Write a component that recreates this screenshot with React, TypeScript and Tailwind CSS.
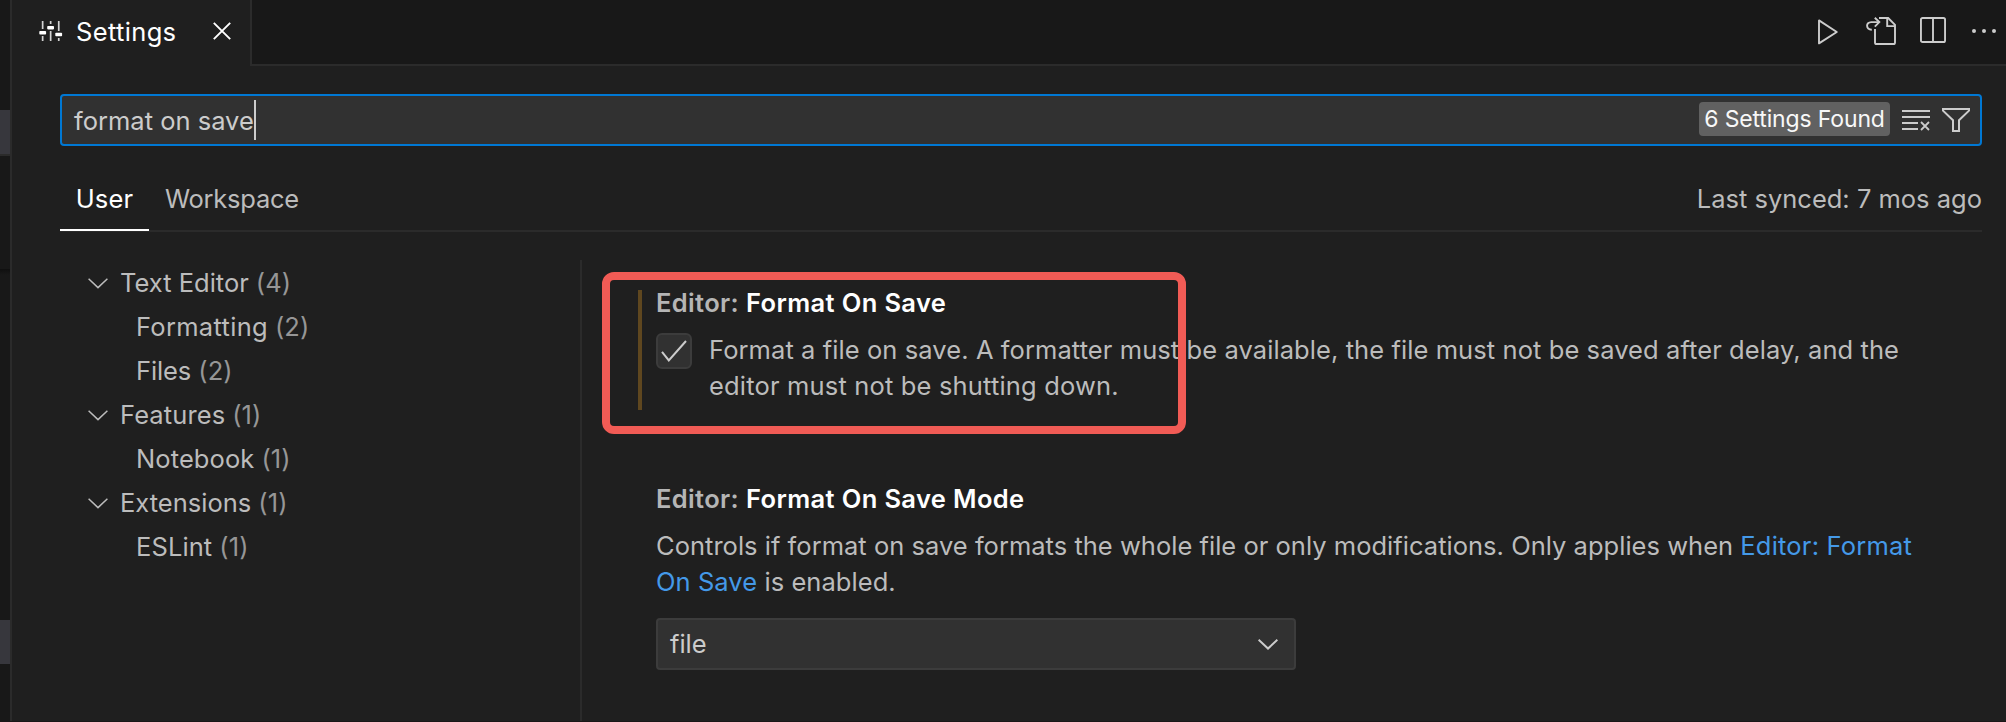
import type { ReactNode } from "react";

type TreeItem = { label: string; count: number; child?: boolean; spacing: string };

const tree: TreeItem[] = [
  { label: "Text Editor", count: 4, spacing: "tracking-[0px]" },
  { label: "Formatting", count: 2, child: true, spacing: "tracking-[0.3px]" },
  { label: "Files", count: 2, child: true, spacing: "tracking-[-0.1px]" },
  { label: "Features", count: 1, spacing: "tracking-[0.1px]" },
  { label: "Notebook", count: 1, child: true, spacing: "tracking-[0.1px]" },
  { label: "Extensions", count: 1, spacing: "tracking-[0px]" },
  { label: "ESLint", count: 1, child: true, spacing: "tracking-[0.1px]" },
];

function SettingsIcon() {
  return (
    <svg width="24" height="20" viewBox="0 0 24 20" className="shrink-0" fill="currentColor">
      <path d="M2.8 0h1.7v8H2.8zM2.8 15h1.7v5H2.8zM10.8 0h1.7v3h-1.7zM10.8 10h1.7v10h-1.7zM18.9 0h1.7v10h-1.7zM18.9 17h1.7v3h-1.7z" opacity="0.8" />
      <rect x="0.3" y="10" width="6.8" height="3.6" rx="0.8" />
      <rect x="8.2" y="5" width="6.8" height="3.4" rx="0.8" />
      <rect x="16.3" y="11.8" width="6.8" height="3.4" rx="0.8" />
    </svg>
  );
}

function CloseIcon() {
  return (
    <svg width="18" height="18" viewBox="0 0 18 18" className="shrink-0" fill="none" stroke="currentColor" strokeWidth="1.9">
      <path d="M0.8 0.8 17.2 17.2M17.2 0.8 0.8 17.2" />
    </svg>
  );
}

function RunIcon() {
  return (
    <svg width="21" height="26" viewBox="0 0 21 26" fill="none" stroke="currentColor" strokeWidth="1.9" strokeLinejoin="round">
      <path d="M1 1.4V24.4L18.8 13Z" />
    </svg>
  );
}

function OpenFileIcon() {
  return (
    <svg width="30" height="28" viewBox="0 0 30 28" fill="none" stroke="currentColor" strokeWidth="1.9">
      <path d="M13 1H22.2L29 7.8V25.4Q29 27 27.4 27H10.6Q9 27 9 25.4V12" />
      <path d="M21.2 1V9.1H29" />
      <path d="M5.8 12.7C-0.4 12.4-0.4 5.2 5.2 5.1H13" />
      <path d="M8.8 0.8 13.3 5.1 8.8 9.6" />
    </svg>
  );
}

function SplitIcon() {
  return (
    <svg width="26" height="26" viewBox="0 0 26 26" fill="none" stroke="currentColor" strokeWidth="1.9">
      <rect x="0.95" y="0.95" width="24.1" height="24.1" rx="1.6" />
      <path d="M13 1V25" />
    </svg>
  );
}

function MoreIcon() {
  return (
    <svg width="24" height="4" viewBox="0 0 24 4" fill="currentColor">
      <circle cx="2" cy="2" r="2" />
      <circle cx="12" cy="2" r="2" />
      <circle cx="22" cy="2" r="2" />
    </svg>
  );
}

function ClearIcon() {
  return (
    <svg width="28" height="21" viewBox="0 0 28 21" fill="none" stroke="currentColor" strokeWidth="2">
      <path d="M0 1H28M0 7H28M0 13H16M0 19H16" />
      <path d="M19 12 27 20M27 12 19 20" strokeWidth="1.8" />
    </svg>
  );
}

function FilterIcon() {
  return (
    <svg width="28" height="24" viewBox="0 0 28 24" fill="none" stroke="currentColor" strokeWidth="2">
      <path d="M1 1H27V2.6L17 12.2V23H11V12.2L1 2.6Z" />
    </svg>
  );
}

function Chevron({ thin }: { thin?: boolean }) {
  return (
    <svg width="20" height="11" viewBox="0 0 20 11" className="shrink-0" fill="none" stroke="currentColor" strokeWidth={thin ? 1.5 : 2}>
      <path d="M0.6 0.8 10 9.6 19.4 0.8" />
    </svg>
  );
}

function Title({ name }: { name: string }) {
  return (
    <h3 className="flex h-9 items-center gap-[7px] whitespace-nowrap font-semibold leading-9 tracking-[0.36px]">
      <span className="text-[#b5b5b5]">Editor:</span>
      <span className="text-white">{name}</span>
    </h3>
  );
}

function Line({ className, children }: { className: string; children: ReactNode }) {
  return <span className={`block whitespace-nowrap ${className}`}>{children}</span>;
}

export default function App() {
  return (
    <div className="flex h-[722px] w-[2006px] overflow-hidden border-b border-[#1a1617] bg-[#1f1f1f] font-['Inter',sans-serif] text-[25.5px] text-[#bcbcbc]">
      <aside className="flex w-3 shrink-0 flex-col border-r-2 border-[#2b2b2b] bg-[#181818]">
        <div className="h-[110px]" />
        <div className="h-[46px] border-b-2 border-[#2b2b2b] bg-[#37373d]" />
        <div className="h-[113px]" />
        <div className="h-[6px] bg-linear-to-b from-[#0f0f0f] to-[#181818]" />
        <div className="h-[345px]" />
        <div className="h-11 bg-[#37373d]" />
      </aside>

      <main className="flex min-w-0 flex-1 flex-col">
        <header className="flex h-[66px] shrink-0">
          <div className="flex w-60 shrink-0 items-center border-r-2 border-[#2b2b2b] pb-1 pl-[27px] text-white">
            <SettingsIcon />
            <span className="ml-[13px] w-[101px] pt-[2px] tracking-[0.35px]">Settings</span>
            <span className="ml-9">
              <CloseIcon />
            </span>
          </div>
          <div className="flex flex-1 items-center justify-end border-b-2 border-[#2b2b2b] bg-[#181818] pr-[10px] text-[#cccccc]">
            <RunIcon />
            <span className="ml-[27px] mb-[2px]">
              <OpenFileIcon />
            </span>
            <span className="mb-1 ml-6">
              <SplitIcon />
            </span>
            <span className="mb-[2px] ml-[26px] flex">
              <MoreIcon />
            </span>
          </div>
        </header>

        <section className="flex min-h-0 flex-1 flex-col pl-12 pr-6 pt-7">
          <div className="flex h-[52px] shrink-0 items-center rounded-[4px] border-2 border-[#0078d4] bg-[#313131] pl-3 pr-[10px] text-[#cccccc]">
            <span className="whitespace-nowrap pt-[2px] tracking-[0px]">format on save</span>
            <span className="h-10 w-[2px] bg-[#cccccc]" />
            <span className="mb-[2px] ml-auto flex h-[34px] w-[191px] items-center justify-center whitespace-nowrap rounded-[4px] bg-[#616161] pt-px text-[23px] tracking-[-0.15px] text-[#f8f8f8]">
              6 Settings Found
            </span>
            <span className="ml-3">
              <ClearIcon />
            </span>
            <span className="ml-3">
              <FilterIcon />
            </span>
          </div>

          <nav className="mt-5 flex h-[66px] shrink-0 items-stretch justify-between border-b-2 border-[#2b2b2b]">
            <div className="flex">
              <div className="-mb-[1px] flex w-[89px] justify-center border-b-2 border-white pt-[15px] leading-9 tracking-[0.15px] text-white">
                User
              </div>
              <div className="pl-4 pt-[15px] leading-9 tracking-[-0.25px]">Workspace</div>
            </div>
            <div className="whitespace-nowrap pt-[15px] leading-9 tracking-[0px]">Last synced: 7 mos ago</div>
          </nav>

          <div className="flex min-h-0 flex-1 pt-7">
            <ul className="w-[522px] shrink-0 border-r-2 border-[#2b2b2b] pt-[1px]">
              {tree.map((item) => (
                <li key={item.label} className={`flex h-11 items-center whitespace-nowrap ${item.child ? "pl-[76px]" : "pl-7"}`}>
                  {!item.child && (
                    <span className="mr-[12px] w-5">
                      <Chevron thin />
                    </span>
                  )}
                  <span className={item.spacing}>{item.label}</span>
                  <span className="ml-[7px] tracking-[0.1px] text-[#969696]">({item.count})</span>
                </li>
              ))}
            </ul>

            <div className="relative flex-1 pl-14 pt-6">
              <div className="pointer-events-none absolute left-5 top-3 h-[162px] w-[584px] rounded-xl border-8 border-[#f15b55]" />
              <article className="flex pt-1.5">
                <div className="h-[120px] w-1 shrink-0 bg-[#5f471f]" />
                <div className="-mt-[5px] pl-[14px]">
                  <Title name="Format On Save" />
                  <div className="mt-[11px] flex">
                    <span className="mt-[1px] flex h-9 w-9 shrink-0 items-center justify-center rounded-md border-2 border-[#3c3c3c] bg-[#313131] text-[#cccccc]">
                      <svg width="26" height="22" viewBox="0 0 26 22" fill="none" stroke="currentColor" strokeWidth="2">
                        <path d="M1 11.8 7.8 20.4 25 1" />
                      </svg>
                    </span>
                    <p className="pl-[17px] leading-9">
                      <Line className="tracking-[0.083px]">
                        Format a file on save. A formatter must be available, the file must not be saved after delay, and the
                      </Line>
                      <Line className="tracking-[0.17px]">editor must not be shutting down.</Line>
                    </p>
                  </div>
                </div>
              </article>

              <article className="pl-[18px] pt-[71px]">
                <Title name="Format On Save Mode" />
                <p className="pt-[11px] leading-9">
                  <Line className="tracking-[0.02px]">
                    Controls if format on save formats the whole file or only modifications. Only applies when{" "}
                    <a className="tracking-[0.2px] text-[#4499e8]">Editor: Format</a>
                  </Line>
                  <Line className="tracking-[0.06px]">
                    <a className="text-[#4499e8]">On Save</a> is enabled.
                  </Line>
                </p>
                <div className="mt-[18px] flex h-[52px] w-[640px] items-center justify-between rounded-[4px] border-2 border-[#3c3c3c] bg-[#313131] pl-3 pr-4 text-[#cccccc]">
                  <span>file</span>
                  <Chevron />
                </div>
              </article>
            </div>
          </div>
        </section>
      </main>
    </div>
  );
}
